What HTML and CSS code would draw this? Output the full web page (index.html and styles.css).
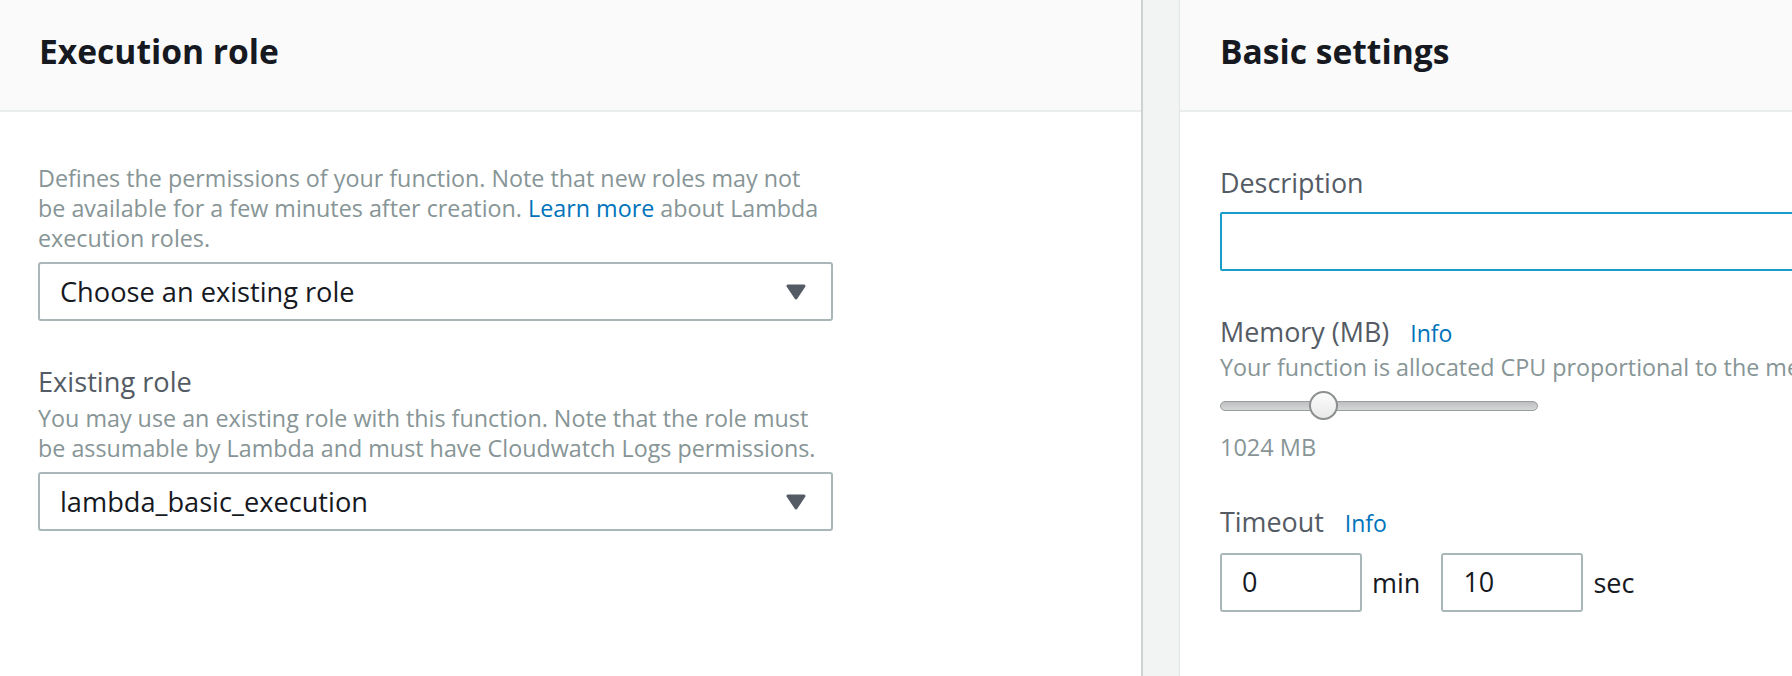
FILE: index.html
```html
<!DOCTYPE html>
<html lang="en">
<head>
<meta charset="utf-8">
<title>Lambda function settings</title>
<link rel="stylesheet" href="styles.css">
</head>
<body>
<div class="page">
  <section class="panel panel-left">
    <header class="panel-head"><h2 class="panel-title">Execution role</h2></header>
    <div class="panel-body body-left">
      <p class="desc">Defines the permissions of your function. Note that new roles may not<br>be available for a few minutes after creation. <a class="link" href="#">Learn more</a> about Lambda<br>execution roles.</p>
      <div class="select">
        <span class="select-text">Choose an existing role</span>
        <svg class="caret" width="20" height="16" viewBox="0 0 20 16"><path d="M2 2 L18 2 L10 14 Z" fill="#545b64" stroke="#545b64" stroke-width="3" stroke-linejoin="round"/></svg>
      </div>
      <div class="field field-role">
        <div class="label">Existing role</div>
        <p class="desc">You may use an existing role with this function. Note that the role must<br>be assumable by Lambda and must have Cloudwatch Logs permissions.</p>
        <div class="select">
          <span class="select-text">lambda_basic_execution</span>
          <svg class="caret" width="20" height="16" viewBox="0 0 20 16"><path d="M2 2 L18 2 L10 14 Z" fill="#545b64" stroke="#545b64" stroke-width="3" stroke-linejoin="round"/></svg>
        </div>
      </div>
    </div>
  </section>
  <div class="gutter"></div>
  <section class="panel panel-right">
    <header class="panel-head"><h2 class="panel-title">Basic settings</h2></header>
    <div class="panel-body body-right">
      <div class="field">
        <div class="label">Description</div>
        <div class="text-input focused"></div>
      </div>
      <div class="field field-memory">
        <div class="label">Memory (MB) <a class="info" href="#">Info</a></div>
        <p class="desc nowrap">Your function is allocated CPU proportional to the memory configured.</p>
        <div class="slider">
          <div class="track"></div>
          <div class="thumb"></div>
        </div>
        <div class="value">1024 MB</div>
      </div>
      <div class="field field-timeout">
        <div class="label">Timeout <a class="info" href="#">Info</a></div>
        <div class="timeout-row">
          <div class="num-input">0</div>
          <span class="unit">min</span>
          <div class="num-input">10</div>
          <span class="unit">sec</span>
        </div>
      </div>
    </div>
  </section>
</div>
</body>
</html>
```
FILE: styles.css
```css
html, body {
  margin: 0;
  padding: 0;
  background: #ffffff;
}
body {
  font-family: "Open Sans", "Noto Sans", sans-serif;
  color: #16191f;
  overflow: hidden;
}
.page {
  display: flex;
  width: 1792px;
  height: 676px;
  overflow: hidden;
}
.panel {
  display: flex;
  flex-direction: column;
  background: #ffffff;
}
.panel-left {
  width: 1141px;
  flex: 0 0 1141px;
}
.panel-right {
  flex: 1 1 auto;
  min-width: 0;
  overflow: hidden;
}
.gutter {
  flex: 0 0 36px;
  background: #f2f3f3;
  border-left: 2px solid #cdd2d2;
  border-right: 1px solid #e3e6e6;
}
.panel-head {
  height: 110px;
  box-sizing: border-box;
  padding-bottom: 7px;
  background: #fafafa;
  border-bottom: 2px solid #eaeded;
  display: flex;
  align-items: center;
  padding-left: 39px;
  flex: 0 0 auto;
}
.panel-head {
  height: 112px;
}
.panel-right .panel-head {
  padding-left: 40px;
}
.panel-title {
  margin: 0;
  font-size: 33.6px;
  line-height: 45px;
  font-weight: 700;
  color: #16191f;
}
.panel-body {
  display: flex;
  flex-direction: column;
}
.body-left {
  padding: 51px 0 0 38px;
}
.body-right {
  padding: 55px 0 0 40px;
}
.desc {
  margin: 0;
  font-size: 23.3px;
  line-height: 30px;
  color: #879596;
  width: 795px;
}
.desc.nowrap {
  white-space: nowrap;
  width: auto;
}
.link {
  color: #0073bb;
  text-decoration: none;
}
.select {
  margin-top: 9px;
  width: 795px;
  height: 59px;
  box-sizing: border-box;
  border: 2px solid #aab7b8;
  border-radius: 3px;
  display: flex;
  align-items: center;
  justify-content: space-between;
  padding: 0 25px 0 20px;
  background: #fff;
}
.select-text {
  font-size: 27.2px;
  line-height: 55px;
  color: #16191f;
}
.caret {
  display: block;
}
.field {
  display: flex;
  flex-direction: column;
}
.field-role {
  margin-top: 45px;
}
.label {
  font-size: 27.2px;
  line-height: 32px;
  color: #545b64;
  white-space: nowrap;
}
.body-right .label {
  font-size: 26.9px;
}
.field-role .label {
  margin-bottom: 5px;
}
.info {
  color: #0073bb;
  text-decoration: none;
  font-size: 23px;
  font-weight: 500;
  margin-left: 14px;
}
.text-input {
  margin-top: 13px;
  width: 700px;
  height: 59px;
  box-sizing: border-box;
  border: 2px solid #1a9ec9;
  border-radius: 2px;
  background: #fff;
}
.field-memory {
  margin-top: 45px;
}
.field-memory .label {
  margin-bottom: 3px;
}
.slider {
  position: relative;
  margin-top: 9px;
  width: 318px;
  height: 29px;
  display: flex;
  align-items: center;
}
.track {
  width: 100%;
  height: 10px;
  box-sizing: border-box;
  border: 1px solid #9a9d9e;
  border-radius: 5px;
  background: linear-gradient(#bdbfc0, #d6d8d8);
}
.thumb {
  position: absolute;
  left: 89px;
  top: 0;
  width: 29px;
  height: 29px;
  box-sizing: border-box;
  border-radius: 50%;
  border: 2px solid #8c8f90;
  background: linear-gradient(#fbfbfb 0%, #f3f3f3 50%, #e8e8e8 100%);
}
.value {
  margin-top: 12px;
  font-size: 23.5px;
  line-height: 30px;
  color: #879596;
}
.field-timeout {
  margin-top: 44px;
}
.timeout-row {
  margin-top: 14px;
  display: flex;
  align-items: center;
}
.num-input {
  width: 142px;
  height: 59px;
  box-sizing: border-box;
  border: 2px solid #aab7b8;
  border-radius: 3px;
  padding-left: 20px;
  font-size: 27px;
  line-height: 54px;
  color: #16191f;
  background: #fff;
}
.unit {
  font-size: 27px;
  color: #16191f;
  margin: 0 21px 0 10px;
}
```
